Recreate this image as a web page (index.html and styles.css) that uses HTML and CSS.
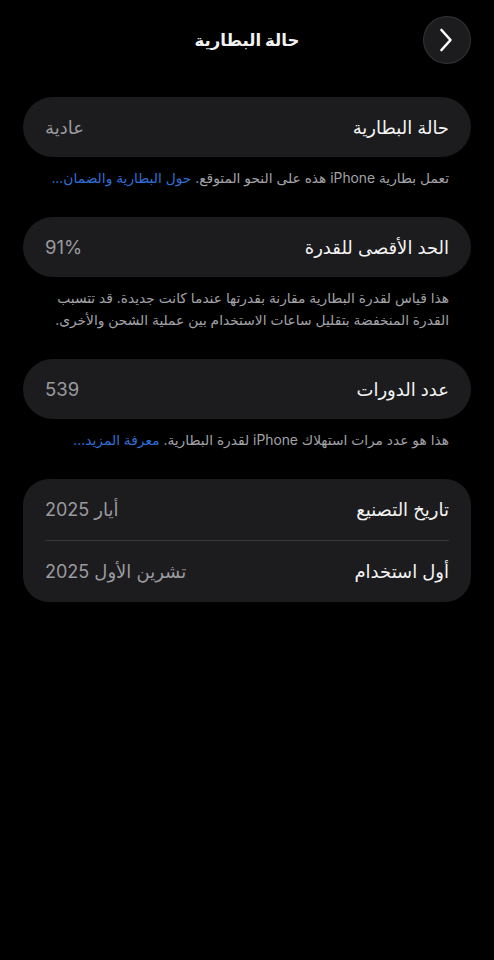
FILE: index.html
```html
<!DOCTYPE html>
<html lang="ar" dir="rtl">
<head>
<meta charset="utf-8">
<title>حالة البطارية</title>
<link rel="stylesheet" href="styles.css">
</head>
<body>
<div class="screen">
  <header class="header">
    <button class="back" aria-label="رجوع">
      <svg width="14" height="24" viewBox="0 0 14 24"><path d="M2.5 2 L11.5 12 L2.5 22" fill="none" stroke="#ffffff" stroke-width="2.6" stroke-linecap="round" stroke-linejoin="round"/></svg>
    </button>
    <h1 class="title">حالة البطارية</h1>
    <span class="spacer"></span>
  </header>

  <section class="group">
    <div class="card">
      <div class="row"><span class="label">حالة البطارية</span><span class="value">عادية</span></div>
    </div>
    <p class="note">تعمل بطارية iPhone هذه على النحو المتوقع. <span class="link">حول البطارية والضمان...</span></p>
  </section>

  <section class="group">
    <div class="card">
      <div class="row"><span class="label">الحد الأقصى للقدرة</span><span class="value num">91%</span></div>
    </div>
    <p class="note">هذا قياس لقدرة البطارية مقارنة بقدرتها عندما كانت جديدة. قد تتسبب القدرة المنخفضة بتقليل ساعات الاستخدام بين عملية الشحن والأخرى.</p>
  </section>

  <section class="group">
    <div class="card">
      <div class="row"><span class="label">عدد الدورات</span><span class="value num">539</span></div>
    </div>
    <p class="note">هذا هو عدد مرات استهلاك iPhone لقدرة البطارية. <span class="link">معرفة المزيد...</span></p>
  </section>

  <section class="group">
    <div class="card card-list">
      <div class="row row-list"><span class="label">تاريخ التصنيع</span><span class="value">أيار 2025</span></div>
      <div class="sep"></div>
      <div class="row row-list"><span class="label">أول استخدام</span><span class="value">تشرين الأول 2025</span></div>
    </div>
  </section>
</div>
</body>
</html>
```

FILE: styles.css
```css
* { box-sizing: border-box; }
html, body {
  margin: 0;
  padding: 0;
  background: #000000;
}
body {
  font-family: "Inter", "DejaVu Sans", "Noto Sans", sans-serif;
  color: #ffffff;
  direction: rtl;
}
.screen {
  width: 494px;
  min-height: 960px;
  padding: 16px 23px 0;
  background: #000000;
}
.header {
  display: grid;
  grid-template-columns: 48px 1fr 48px;
  align-items: center;
  height: 48px;
  margin-bottom: 33px;
}
.back {
  width: 48px;
  height: 48px;
  border-radius: 50%;
  background: #1c1c1e;
  border: 1px solid rgba(255,255,255,0.10);
  display: flex;
  align-items: center;
  justify-content: center;
  padding: 0 2px 0 0;
  margin: 0;
}
.title {
  margin: 0;
  text-align: center;
  font-size: 16.5px;
  font-weight: 700;
  color: #f2f2f2;
}
.group {
  margin-bottom: 28px;
}
.card {
  background: #1c1c1e;
  border-radius: 30px;
}
.card-list {
  border-radius: 26px;
}
.row {
  height: 60px;
  display: flex;
  align-items: center;
  justify-content: space-between;
  padding: 0 22px;
}
.row-list {
  height: 61px;
}
.label {
  font-size: 18px;
  color: #f4f4f4;
}
.value {
  font-size: 18px;
  color: #9a9a9f;
}
.num {
  font-size: 18.5px;
}
.sep {
  height: 1px;
  margin: 0 22px;
  background: #38383a;
}
.note {
  margin: 10px 22px 0;
  font-size: 13.8px;
  line-height: 22px;
  color: #a2a2a7;
}
.link {
  color: #2f6fd6;
}
```
